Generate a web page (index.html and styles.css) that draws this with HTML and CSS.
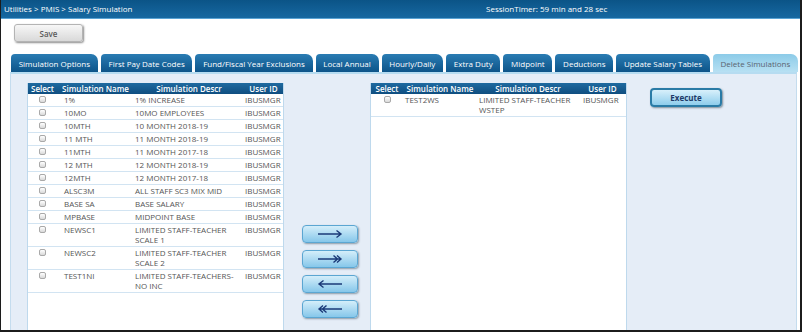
FILE: index.html
```html
<!DOCTYPE html>
<html>
<head>
<meta charset="utf-8">
<link rel="stylesheet" href="styles.css">
</head>
<body>
<div class="frame">
  <header class="topbar">
    <span class="crumbs">Utilities &gt; PMIS &gt; Salary Simulation</span>
    <span class="timer">SessionTimer: 59 min and 28 sec</span>
  </header>
  <div class="toolbar">
    <button class="btn-save">Save</button>
  </div>
  <nav class="tabs">
    <span class="tab">Simulation Options</span>
    <span class="tab">First Pay Date Codes</span>
    <span class="tab">Fund/Fiscal Year Exclusions</span>
    <span class="tab">Local Annual</span>
    <span class="tab">Hourly/Daily</span>
    <span class="tab">Extra Duty</span>
    <span class="tab">Midpoint</span>
    <span class="tab">Deductions</span>
    <span class="tab">Update Salary Tables</span>
    <span class="tab active">Delete Simulations</span>
  </nav>
  <section class="content">
    <div class="panel">
      <table class="grid grid-left">
        <colgroup><col class="w-sel"><col class="w-name"><col class="w-desc"><col class="w-user"></colgroup>
        <thead><tr><th>Select</th><th>Simulation Name</th><th>Simulation Descr</th><th>User ID</th></tr></thead>
        <tbody>
          <tr><td class="c-sel"><input type="checkbox" class="cb"></td><td class="c-name">1%</td><td class="c-desc">1% INCREASE</td><td class="c-user">IBUSMGR</td></tr>
          <tr><td class="c-sel"><input type="checkbox" class="cb"></td><td class="c-name">10MO</td><td class="c-desc">10MO EMPLOYEES</td><td class="c-user">IBUSMGR</td></tr>
          <tr><td class="c-sel"><input type="checkbox" class="cb"></td><td class="c-name">10MTH</td><td class="c-desc">10 MONTH 2018-19</td><td class="c-user">IBUSMGR</td></tr>
          <tr><td class="c-sel"><input type="checkbox" class="cb"></td><td class="c-name">11 MTH</td><td class="c-desc">11 MONTH 2018-19</td><td class="c-user">IBUSMGR</td></tr>
          <tr><td class="c-sel"><input type="checkbox" class="cb"></td><td class="c-name">11MTH</td><td class="c-desc">11 MONTH 2017-18</td><td class="c-user">IBUSMGR</td></tr>
          <tr><td class="c-sel"><input type="checkbox" class="cb"></td><td class="c-name">12 MTH</td><td class="c-desc">12 MONTH 2018-19</td><td class="c-user">IBUSMGR</td></tr>
          <tr><td class="c-sel"><input type="checkbox" class="cb"></td><td class="c-name">12MTH</td><td class="c-desc">12 MONTH 2017-18</td><td class="c-user">IBUSMGR</td></tr>
          <tr><td class="c-sel"><input type="checkbox" class="cb"></td><td class="c-name">ALSC3M</td><td class="c-desc">ALL STAFF SC3 MIX MID</td><td class="c-user">IBUSMGR</td></tr>
          <tr><td class="c-sel"><input type="checkbox" class="cb"></td><td class="c-name">BASE SA</td><td class="c-desc">BASE SALARY</td><td class="c-user">IBUSMGR</td></tr>
          <tr><td class="c-sel"><input type="checkbox" class="cb"></td><td class="c-name">MPBASE</td><td class="c-desc">MIDPOINT BASE</td><td class="c-user">IBUSMGR</td></tr>
          <tr><td class="c-sel"><input type="checkbox" class="cb"></td><td class="c-name">NEWSC1</td><td class="c-desc">LIMITED STAFF-TEACHER SCALE 1</td><td class="c-user">IBUSMGR</td></tr>
          <tr><td class="c-sel"><input type="checkbox" class="cb"></td><td class="c-name">NEWSC2</td><td class="c-desc">LIMITED STAFF-TEACHER SCALE 2</td><td class="c-user">IBUSMGR</td></tr>
          <tr><td class="c-sel"><input type="checkbox" class="cb"></td><td class="c-name">TEST1NI</td><td class="c-desc">LIMITED STAFF-TEACHERS-NO INC</td><td class="c-user">IBUSMGR</td></tr>
        </tbody>
      </table>
    </div>
    <div class="movers">
      <button class="btn-move" title="Move selected">
        <svg width="28" height="10" viewBox="0 0 28 10"><path d="M2 5H25M20.5 1.5L25 5L20.5 8.5" fill="none" stroke="#1b3a78" stroke-width="1.4"/></svg>
      </button>
      <button class="btn-move" title="Move all">
        <svg width="28" height="10" viewBox="0 0 28 10"><path d="M2 5H25M17.5 1.5L21.5 5L17.5 8.5M21 1.5L25 5L21 8.5" fill="none" stroke="#1b3a78" stroke-width="1.4"/></svg>
      </button>
      <button class="btn-move" title="Remove selected">
        <svg width="28" height="10" viewBox="0 0 28 10"><path d="M26 5H3M7.5 1.5L3 5L7.5 8.5" fill="none" stroke="#1b3a78" stroke-width="1.4"/></svg>
      </button>
      <button class="btn-move" title="Remove all">
        <svg width="28" height="10" viewBox="0 0 28 10"><path d="M26 5H3M10.5 1.5L6.5 5L10.5 8.5M7 1.5L3 5L7 8.5" fill="none" stroke="#1b3a78" stroke-width="1.4"/></svg>
      </button>
    </div>
    <div class="panel">
      <table class="grid grid-right">
        <colgroup><col class="w-sel"><col class="w-name"><col class="w-desc"><col class="w-user"></colgroup>
        <thead><tr><th>Select</th><th>Simulation Name</th><th>Simulation Descr</th><th>User ID</th></tr></thead>
        <tbody>
          <tr><td class="c-sel"><input type="checkbox" class="cb"></td><td class="c-name">TEST2WS</td><td class="c-desc">LIMITED STAFF-TEACHER WSTEP</td><td class="c-user">IBUSMGR</td></tr>
        </tbody>
      </table>
    </div>
    <div class="actions">
      <button class="btn-exec">Execute</button>
    </div>
  </section>
</div>
</body>
</html>
```

FILE: styles.css
```css
html, body {
  margin: 0;
  padding: 0;
  background: #ffffff;
}

.frame {
  width: 802px;
  height: 332px;
  box-sizing: border-box;
  border-style: solid;
  border-color: #1c1c1c;
  border-width: 0 2px 2px 1px;
  display: flex;
  flex-direction: column;
  overflow: hidden;
  font-family: "Open Sans", "DejaVu Sans", sans-serif;
  font-size: 8px;
  color: #4a4a4a;
  background: #ffffff;
}

.topbar {
  height: 18px;
  border-bottom: 1px solid #5aa3d4;
  background: linear-gradient(#0b5487, #1768a1);
  color: #ffffff;
  display: grid;
  grid-template-columns: 482px auto;
  align-items: center;
  padding-left: 3px;
  font-size: 8px;
  line-height: 18px;
}

.toolbar {
  padding: 5px 0 0 13px;
  height: 18px;
}

.btn-save {
  display: block;
  width: 69px;
  height: 18px;
  padding: 0;
  box-sizing: border-box;
  border: 1px solid #b4b4b4;
  border-radius: 3px;
  background: linear-gradient(#f7f7f7, #d9d9d9);
  box-shadow: 1px 1px 2px #8c8c8c;
  font-family: "Open Sans", "DejaVu Sans", sans-serif;
  font-size: 8px;
  font-weight: 600;
  color: #5a5a5a;
}

.tabs {
  display: flex;
  gap: 3px;
  margin-top: 12px;
  padding: 0 2px 0 10px;
  height: 18px;
}

.tab {
  flex: 1 1 auto;
  display: flex;
  align-items: center;
  justify-content: center;
  padding: 0 6px;
  height: 18px;
  border-radius: 4px 7px 0 0;
  background: linear-gradient(#2a7cb3, #0d5489);
  color: #ffffff;
  white-space: nowrap;
}

.tab.active {
  background: linear-gradient(#8ccbe8, #b7e0f3);
  color: #5a6470;
}

.content {
  flex: 1;
  margin: 0 3px 0 9px;
  border: 1px solid #c4dcee;
  border-top: 2px solid #b6dcf1;
  border-bottom: 0;
  background: #e5edf7;
  padding: 9px 0 0 16px;
  display: flex;
  align-items: stretch;
  min-height: 0;
}

.panel {
  width: 257px;
  box-sizing: border-box;
  background: #ffffff;
  border-left: 1px solid #bed9ed;
  border-right: 1px solid #bed9ed;
  flex: none;
}

.grid {
  width: 100%;
  border-collapse: collapse;
  table-layout: fixed;
}

.grid th {
  height: 11px;
  line-height: 11px;
  padding: 0;
  background: linear-gradient(#1f6aa0, #0f4e80);
  color: #ffffff;
  font-weight: 600;
  text-align: center;
  white-space: nowrap;
  overflow: hidden;
}

.grid td {
  padding: 1px 0 1px 0;
  line-height: 10px;
  vertical-align: top;
  border-bottom: 1px solid #d2e4f2;
  color: #555555;
}

.grid-left .w-sel { width: 29px; }
.grid-left .w-name { width: 77px; }
.grid-left .w-desc { width: 110px; }
.grid-left .w-user { width: 39px; }
.grid-left .c-name { padding-left: 7px; }
.grid-left .c-desc { padding-left: 1px; }
.grid-left .c-user { padding-left: 1px; }

.grid-right .w-sel { width: 32px; }
.grid-right .w-name { width: 74px; }
.grid-right .w-desc { width: 102px; }
.grid-right .w-user { width: 47px; }
.grid-right .c-name { padding-left: 2px; }
.grid-right .c-desc { padding-left: 2px; }
.grid-right .c-user { padding-left: 4px; }

.c-sel { text-align: center; }

.cb {
  -webkit-appearance: none;
  appearance: none;
  display: block;
  width: 7px;
  height: 7px;
  margin: 1px auto 0;
  box-sizing: border-box;
  border: 1px solid #a9a9a9;
  border-radius: 2px;
  background: linear-gradient(#ffffff, #d9d9d9);
}

.movers {
  width: 86px;
  flex: none;
  box-sizing: border-box;
  padding: 142px 0 0 18px;
  display: flex;
  flex-direction: column;
  gap: 7px;
}

.btn-move {
  width: 56px;
  height: 18px;
  padding: 0;
  box-sizing: border-box;
  border: 1px solid #5ba6d2;
  border-radius: 4px;
  background: linear-gradient(#d4eefa, #86c7ea);
  box-shadow: 1px 1px 2px #8a9aa6;
  display: flex;
  align-items: center;
  justify-content: center;
}

.btn-move svg { display: block; }

.actions {
  flex: 1;
  padding: 5px 0 0 23px;
}

.btn-exec {
  display: block;
  width: 72px;
  height: 19px;
  padding: 0;
  box-sizing: border-box;
  border: 2px solid #2a7ba6;
  border-radius: 4px;
  background: linear-gradient(#d8f0fb, #8ecdec);
  box-shadow: 1px 1px 2px #7d8d99;
  font-family: "Open Sans", "DejaVu Sans", sans-serif;
  font-size: 8px;
  font-weight: 700;
  color: #1d3a68;
}
```
